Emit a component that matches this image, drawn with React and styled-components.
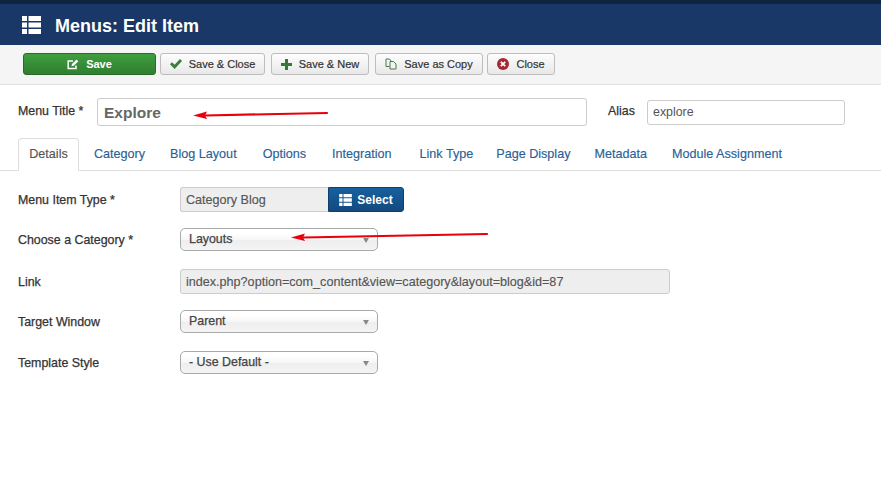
import styled, { createGlobalStyle } from "styled-components";

const Global = createGlobalStyle`
  html, body { margin: 0; background: #fff; }
  body { font-family: "Liberation Sans", Arial, sans-serif; color: #333; }
`;

const Page = styled.div`
  position: relative;
  width: 881px;
  height: 495px;
  overflow: hidden;
`;

const Header = styled.header`
  height: 41px;
  background: #1a3867;
  border-top: 4px solid #10243f;
  display: flex;
  align-items: center;
  padding-left: 22px;
  gap: 14px;
  color: #fff;
`;

const Title = styled.h1`
  margin: 2px 0 0;
  font-size: 18px;
  font-weight: 700;
  line-height: 1;
`;

const Toolbar = styled.div`
  height: 40px;
  box-sizing: border-box;
  background: #f5f5f5;
  border-bottom: 1px solid #e1e1e1;
  padding: 8px 0 0 23px;
  display: flex;
  align-items: flex-start;
  gap: 4px;
`;

const Btn = styled.button`
  height: 22px;
  width: ${({ $w }) => $w}px;
  margin-right: ${({ $mr }) => $mr || 0}px;
  padding: 0;
  box-sizing: border-box;
  display: flex;
  align-items: center;
  justify-content: center;
  gap: 7px;
  border-radius: 3px;
  font: 11px "Liberation Sans", Arial, sans-serif;
  -webkit-text-stroke: 0.2px #333;
  color: #333;
  background: linear-gradient(#fdfdfd, #e8e8e8);
  border: 1px solid #bdbdbd;
`;

const SaveBtn = styled(Btn)`
  color: #fff;
  font-weight: 700;
  -webkit-text-stroke: 0;
  background: linear-gradient(#3f9e3f, #2f7f2f);
  border-color: #2a6b2a;
`;

const TitleRow = styled.div`
  display: flex;
  align-items: center;
  padding: 13px 0 0 18px;
`;

const Label = styled.label`
  font-size: 12.4px;
  line-height: 16px;
  color: #333;
  -webkit-text-stroke: 0.25px #333;
  width: ${({ $w }) => $w}px;
  flex: none;
  margin-top: ${({ $mt }) => $mt || 0}px;
`;

const TextInput = styled.div`
  box-sizing: border-box;
  width: ${({ $w }) => $w}px;
  height: ${({ $h }) => $h}px;
  margin-right: ${({ $mr }) => $mr || 0}px;
  border: 1px solid #ccc;
  border-radius: 3px;
  display: flex;
  align-items: center;
  padding-left: ${({ $big }) => ($big ? 6 : 5)}px;
  padding-top: ${({ $big }) => ($big ? 1 : 0)}px;
  font-size: ${({ $big }) => ($big ? 15.5 : 12.4)}px;
  font-weight: ${({ $big }) => ($big ? 700 : 400)};
  color: ${({ $big }) => ($big ? "#666" : "#555")};
  background: #fff;
`;

const Tabs = styled.nav`
  display: flex;
  margin-top: 12px;
  height: 33px;
  box-sizing: border-box;
  border-bottom: 1px solid #ddd;
  padding-left: 18px;
`;

const Tab = styled.a`
  box-sizing: border-box;
  height: 32px;
  padding-bottom: 1px;
  margin-right: ${({ $gap }) => $gap}px;
  display: flex;
  align-items: center;
  font-size: 12.6px;
  -webkit-text-stroke: 0.15px #2a5f99;
  color: #2a5f99;
`;

const ActiveTab = styled(Tab)`
  height: 33px;
  width: 61px;
  justify-content: center;
  color: #555;
  -webkit-text-stroke: 0.15px #555;
  background: #fff;
  border: 1px solid #ddd;
  border-bottom-color: #fff;
  border-radius: 4px 4px 0 0;
`;

const Form = styled.div`
  padding: 16px 0 0 18px;
  display: flex;
  flex-direction: column;
`;

const Row = styled.div`
  display: flex;
  align-items: center;
  height: ${({ $h }) => $h}px;
  margin-bottom: ${({ $mb }) => $mb}px;
`;

const ReadOnly = styled.div`
  box-sizing: border-box;
  width: ${({ $w }) => $w}px;
  height: 25px;
  background: #eee;
  border: 1px solid #ccc;
  border-radius: ${({ $joined }) => ($joined ? "3px 0 0 3px" : "3px")};
  ${({ $joined }) => $joined && "border-right: 0;"}
  padding-left: 5px;
  display: flex;
  align-items: center;
  font-size: 12.6px;
  -webkit-text-stroke: 0.15px #555;
  color: #555;
`;

const SelectBtn = styled.button`
  box-sizing: border-box;
  width: 76px;
  height: 25px;
  padding: 0;
  display: flex;
  align-items: center;
  justify-content: center;
  gap: 5px;
  color: #fff;
  font: 700 12px "Liberation Sans", Arial, sans-serif;
  background: linear-gradient(#17609f, #134a7e);
  border: 1px solid #113f6c;
  border-radius: 0 3px 3px 0;
`;

const Select = styled.div`
  box-sizing: border-box;
  width: 198px;
  height: 23px;
  border: 1px solid #aaa;
  border-radius: 5px;
  background: linear-gradient(#fff 20%, #f6f6f6 50%, #eee 52%, #f4f4f4);
  display: flex;
  align-items: center;
  justify-content: space-between;
  padding: 0 8px 1px;
  font-size: 12.4px;
  -webkit-text-stroke: 0.25px #444;
  color: #444;
`;

const Caret = styled.span`
  width: 0;
  height: 0;
  margin-top: 2px;
  border-left: 3px solid transparent;
  border-right: 3px solid transparent;
  border-top: 5px solid #888;
`;

const Annotation = styled.svg`
  position: absolute;
  left: 0;
  top: 0;
  pointer-events: none;
`;

const GridIcon = ({ size, w }) => (
  <svg width={w} height={size} viewBox="0 0 19 18" fill="#fff">
    <path d="M0 0h5v5H0zM6.500 0H19v5H6.500zM0 6.500h5v5H0zM6.500 6.500H19v5H6.500zM0 13h5v5H0zM6.500 13H19v5H6.500z" />
  </svg>
);

const EditIcon = () => (
  <svg width="12" height="11" viewBox="0 0 12 11" fill="none">
    <path d="M9 6.500V9.500H1.200V2H6" stroke="#fff" strokeWidth="1.500" />
    <path d="M4.500 7.200 5 5 9.500 .6l1.800 1.700L6.800 6.700z" fill="#fff" />
  </svg>
);

const CheckIcon = () => (
  <svg width="12" height="10" viewBox="0 0 12 10">
    <path d="M0 5.200 2 3.200 4.600 5.800 10 0 12 2 4.600 10z" fill="#3b7d3b" />
  </svg>
);

const PlusIcon = () => (
  <svg width="11" height="11" viewBox="0 0 11 11">
    <path d="M4 0h3v4h4v3H7v4H4V7H0V4h4z" fill="#2f7d32" />
  </svg>
);

const CopyIcon = () => (
  <svg width="12" height="12" viewBox="0 0 12 12" fill="none" stroke="#4a7a4a" strokeWidth="1">
    <path d="M4.500 8.500H1V1h3.500l1.500 2" />
    <path d="M5 3.500h3.500l2.500 2.500v5H5z" fill="#f4f4f4" />
  </svg>
);

const CloseIcon = () => (
  <svg width="12" height="12" viewBox="0 0 12 12">
    <circle cx="6" cy="6" r="6" fill="#a32a33" />
    <path d="M3.800 3.800l4.400 4.400M8.200 3.800l-4.400 4.400" stroke="#fff" strokeWidth="1.800" />
  </svg>
);

const tabs = [
  ["Category", 25],
  ["Blog Layout", 26],
  ["Options", 26],
  ["Integration", 28],
  ["Link Type", 23],
  ["Page Display", 24],
  ["Metadata", 25],
  ["Module Assignment", 0],
];

const App = () => (
  <Page>
    <Global />
    <Header>
      <GridIcon size={18} w={19} />
      <Title>Menus: Edit Item</Title>
    </Header>
    <Toolbar>
      <SaveBtn $w={133}>
        <EditIcon />
        Save
      </SaveBtn>
      <Btn $w={105} $mr={2}>
        <CheckIcon />
        Save &amp; Close
      </Btn>
      <Btn $w={98} $mr={2}>
        <PlusIcon />
        Save &amp; New
      </Btn>
      <Btn $w={108}>
        <CopyIcon />
        Save as Copy
      </Btn>
      <Btn $w={68}>
        <CloseIcon />
        Close
      </Btn>
    </Toolbar>
    <TitleRow>
      <Label $w={79} $mt={-2}>
        Menu Title *
      </Label>
      <TextInput $w={490} $h={28} $mr={21} $big>
        Explore
      </TextInput>
      <Label $w={39} $mt={-2}>
        Alias
      </Label>
      <TextInput $w={198} $h={25}>
        explore
      </TextInput>
    </TitleRow>
    <Tabs>
      <ActiveTab $gap={15}>Details</ActiveTab>
      {tabs.map(([name, gap]) => (
        <Tab key={name} $gap={gap}>
          {name}
        </Tab>
      ))}
    </Tabs>
    <Form>
      <Row $h={25} $mb={16}>
        <Label $w={162}>Menu Item Type *</Label>
        <ReadOnly $w={148} $joined>
          Category Blog
        </ReadOnly>
        <SelectBtn>
          <GridIcon size={12} w={13} />
          Select
        </SelectBtn>
      </Row>
      <Row $h={23} $mb={18}>
        <Label $w={162}>Choose a Category *</Label>
        <Select>
          Layouts
          <Caret />
        </Select>
      </Row>
      <Row $h={25} $mb={16}>
        <Label $w={162}>Link</Label>
        <ReadOnly $w={490}>index.php?option=com_content&amp;view=category&amp;layout=blog&amp;id=87</ReadOnly>
      </Row>
      <Row $h={23} $mb={18}>
        <Label $w={162}>Target Window</Label>
        <Select>
          Parent
          <Caret />
        </Select>
      </Row>
      <Row $h={23} $mb={0}>
        <Label $w={162}>Template Style</Label>
        <Select>
          - Use Default -
          <Caret />
        </Select>
      </Row>
    </Form>
    <Annotation width="881" height="495" viewBox="0 0 881 495">
      <path d="M327 113 205 115.500" stroke="#e8000b" strokeWidth="2.200" strokeLinecap="round" />
      <path d="M193 115.500 207 111.500 205 115.500 207 119z" fill="#e8000b" />
      <path d="M487 234 303 237.500" stroke="#e8000b" strokeWidth="2.200" strokeLinecap="round" />
      <path d="M291 237.500 305 233.500 303 237.500 305 241z" fill="#e8000b" />
    </Annotation>
  </Page>
);

export default App;
